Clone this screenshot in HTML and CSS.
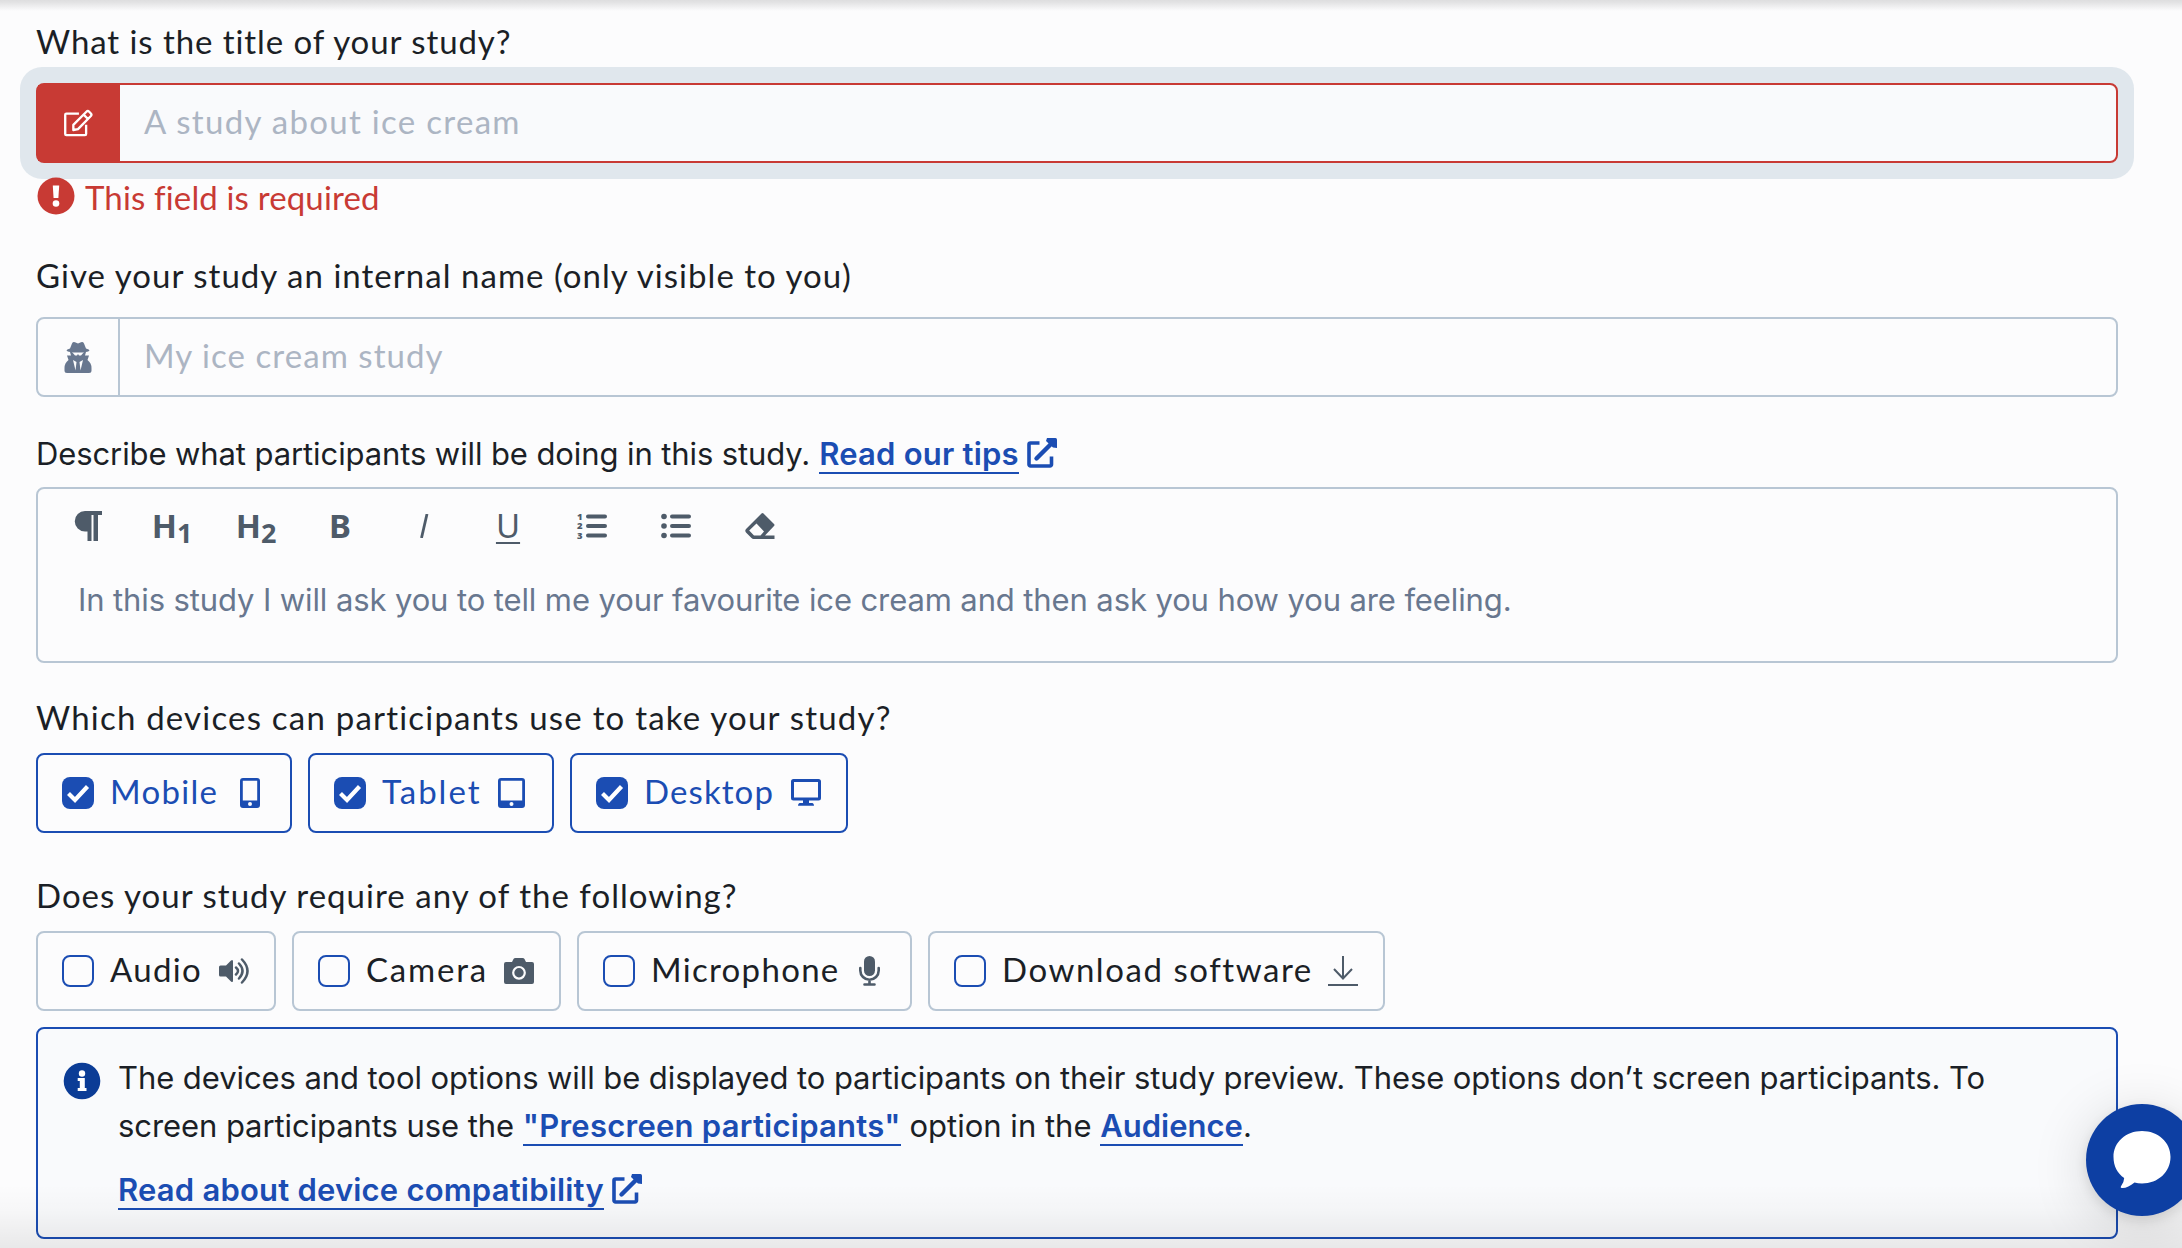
FILE: index.html
```html
<!DOCTYPE html>
<html lang="en">
<head>
<meta charset="utf-8">
<title>Study details</title>
<link rel="stylesheet" href="styles.css">
</head>
<body>
<svg class="defs" width="0" height="0">
  <symbol id="check" viewBox="0 0 32 32"><path d="M6.500 16.500 L13 23 L25.500 9.500" fill="none" stroke="#fff" stroke-width="4.200"/></symbol>
  <symbol id="external" viewBox="0 0 30 30"><path d="M12.500 5H3.500A1.500 1.500 0 0 0 2 6.500V26.500A1.500 1.500 0 0 0 3.500 28H23A1.500 1.500 0 0 0 24.500 26.500V18.500" fill="none" stroke="currentColor" stroke-width="3.600"/><path d="M9.500 20.500 25 5" fill="none" stroke="currentColor" stroke-width="4.400" stroke-linecap="round"/><path d="M20 0H28.500Q30 0 30 1.500V10L26 9.500 19 3Z" fill="currentColor"/></symbol>
</svg>
<form class="form">
  <label class="label l-title"><span>What is the title of your study?</span></label>
  <div class="field field-error">
    <div class="addon"><svg width="30" height="28" viewBox="0 0 32 30" fill="none" stroke="#fff" stroke-width="2.500" stroke-linejoin="round"><path d="M17 5H3.500A1.200 1.200 0 0 0 2.300 6.200V26.800A1.200 1.200 0 0 0 3.500 28H23.500A1.200 1.200 0 0 0 24.700 26.800V17"/><path d="M11 22.500V17L25 3Q26.500 1.500 28 3L29.800 4.800Q31 6.200 29.800 7.500L16 21.500ZM22 6 27 11"/></svg></div>
    <span class="hint h-title">A study about ice cream</span>
  </div>
  <div class="error"><svg width="38" height="38" viewBox="0 0 38 38"><circle cx="19" cy="19" r="18.500" fill="#c83a34"/><path d="M15.800 8.500H22.200L21.400 21H16.600Z" fill="#fff"/><circle cx="19" cy="26.500" r="3.300" fill="#fff"/></svg><span>This field is required</span></div>
  <label class="label l-name"><span>Give your study an internal name (only visible to you)</span></label>
  <div class="field">
    <div class="addon"><svg width="28" height="31" viewBox="0 0 28 31" fill="#68778f"><path d="M8 1.500Q9-.5 11 .3L14 1.500 17 .3Q19-.5 20 1.500L22 6.500Q25.500 7.500 25.500 8.500 24 10.500 14 10.500T2.500 8.500Q2.500 7.500 6 6.500Z"/><path d="M6 10 7 13.500H3L4.500 18Q.5 21 .5 26V28.500Q.5 31 3 31H25Q27.500 31 27.500 28.500V26Q27.500 21 23.500 18L25 13.500H21L22 10H20L17 13.500H15L14 12 13 13.500H11L8 10Z"/><path d="M9 18 12.500 20 11.500 28.500ZM19 18 15.500 20 16.500 28.500Z" fill="#fcfcfd"/></svg></div>
    <span class="hint h-name">My ice cream study</span>
  </div>
  <div class="label l-desc sans"><span class="d-text">Describe what participants will be doing in this study.</span><a class="link d-link">Read our tips</a><svg class="ext" width="30" height="30"><use href="#external"/></svg></div>
  <div class="editor">
    <div class="toolbar">
      <span class="tool"><svg width="28" height="30" viewBox="0 0 28 30" fill="#4e5b69"><path d="M11 0H28V4H24V30H19.500V4H17.500V30H13.500V20.500H11A10.250 10.250 0 0 1 11 0Z"/></svg></span>
      <span class="tool">H<sub>1</sub></span>
      <span class="tool">H<sub>2</sub></span>
      <span class="tool">B</span>
      <span class="tool"><svg width="10" height="24" viewBox="0 0 10 24"><path d="M8 0 2.500 24" stroke="#4e5b69" stroke-width="2.800"/></svg></span>
      <span class="tool under">U</span>
      <span class="tool"><svg class="list" width="30" height="28" viewBox="0 0 30 28"><path d="M11 4.500H28M11 14H28M11 23.500H28" stroke="#4e5b69" stroke-width="4" stroke-linecap="round"/><g fill="#4e5b69" class="digits"><text x="0" y="7.500">1</text><text x="0" y="17">2</text><text x="0" y="26.500">3</text></g></svg></span>
      <span class="tool"><svg width="30" height="28" viewBox="0 0 30 28"><path d="M11 4.500H28M11 14H28M11 23.500H28" stroke="#4e5b69" stroke-width="4" stroke-linecap="round"/><g fill="#4e5b69"><circle cx="3" cy="4.500" r="2.800"/><circle cx="3" cy="14" r="2.800"/><circle cx="3" cy="23.500" r="2.800"/></g></svg></span>
      <span class="tool"><svg class="eraser" width="30" height="26" viewBox="0 0 30 26"><path fill="#4e5b69" fill-rule="evenodd" d="M18.500.5 29 11Q30 12 29 13L20 22.500H29.500V26H8.500Q7.500 26 6.500 25L1 19.500Q-.5 17.800 1 16L16.500.5Q17.500-.5 18.500.5ZM11.500 10.500 4.200 17.500 9 22.500H15.500L19 18.500Z"/></svg></span>
    </div>
    <p class="sans editor-hint">In this study I will ask you to tell me your favourite ice cream and then ask you how you are feeling.</p>
  </div>
  <label class="label l-devices"><span>Which devices can participants use to take your study?</span></label>
  <div class="chips">
    <div class="chip on w-mobile"><svg class="box" width="32" height="32"><use href="#check"/></svg><span class="t-mobile">Mobile</span><svg class="end" width="20" height="30" viewBox="0 0 20 30"><path fill="currentColor" fill-rule="evenodd" d="M3 0H17A3 3 0 0 1 20 3V27A3 3 0 0 1 17 30H3A3 3 0 0 1 0 27V3A3 3 0 0 1 3 0ZM2.800 2.800V22.500H17.200V2.800ZM10 24A2 2 0 1 0 10 28 2 2 0 1 0 10 24Z"/></svg></div>
    <div class="chip on w-tablet"><svg class="box" width="32" height="32"><use href="#check"/></svg><span class="t-tablet">Tablet</span><svg class="end" width="27" height="30" viewBox="0 0 27 30"><path fill="currentColor" fill-rule="evenodd" d="M3 0H24A3 3 0 0 1 27 3V27A3 3 0 0 1 24 30H3A3 3 0 0 1 0 27V3A3 3 0 0 1 3 0ZM2.800 2.800V22.500H24.200V2.800ZM13.500 24A2 2 0 1 0 13.500 28 2 2 0 1 0 13.500 24Z"/></svg></div>
    <div class="chip on w-desktop"><svg class="box" width="32" height="32"><use href="#check"/></svg><span class="t-desktop">Desktop</span><svg class="end" width="30" height="28" viewBox="0 0 30 28"><path fill="currentColor" fill-rule="evenodd" d="M2.500 0H27.500Q30 0 30 2.500V19Q30 21.500 27.500 21.500H18V24H21.500Q23 24.500 23 26.800H7Q7 24.500 8.500 24H12V21.500H2.500Q0 21.500 0 19V2.500Q0 0 2.500 0ZM3 3V18.500H27V3Z"/></svg></div>
  </div>
  <label class="label l-require"><span>Does your study require any of the following?</span></label>
  <div class="chips">
    <div class="chip w-audio"><i class="box"></i><span class="t-audio">Audio</span><svg class="end" width="31" height="26" viewBox="0 0 31 26"><path d="M1.500 7.500H7L12 2.500Q14 1 14 3.500V22.500Q14 25 12 23.500L7 18.500H1.500Q0 18.500 0 17V9Q0 7.500 1.500 7.500Z" fill="currentColor"/><path d="M17 9.500Q21 13 17 16.500M20 5.500Q27 13 20 20.500M23 1.500Q34 13 23 24.500" fill="none" stroke="currentColor" stroke-width="2.500" stroke-linecap="round"/></svg></div>
    <div class="chip w-camera"><i class="box"></i><span class="t-camera">Camera</span><svg class="end" width="30" height="26" viewBox="0 0 30 26"><path d="M2 4H8L9.500 1Q10 0 11.500 0H18.500Q20 0 20.500 1L22 4H28Q30 4 30 6V24Q30 26 28 26H2Q0 26 0 24V6Q0 4 2 4Z" fill="currentColor"/><circle cx="15" cy="14.800" r="5.800" fill="none" stroke="#fcfcfd" stroke-width="2.200"/></svg></div>
    <div class="chip w-mic"><i class="box"></i><span class="t-mic">Microphone</span><svg class="end mic" width="21" height="30" viewBox="0 0 21 30"><rect x="5" width="11" height="20" rx="5.500" fill="currentColor"/><path d="M1.300 12V14.500A9.200 9.200 0 0 0 19.700 14.500V12M10.500 24V28M5.500 28.500H15.500" fill="none" stroke="currentColor" stroke-width="2.600" stroke-linecap="round"/></svg></div>
    <div class="chip w-down"><i class="box"></i><span class="t-down">Download software</span><svg class="end" width="30" height="30" viewBox="0 0 30 30"><path d="M15 0V22M6 13 15 22.500 24 13M0 29H30" fill="none" stroke="currentColor" stroke-width="2"/></svg></div>
  </div>
  <div class="info">
    <svg class="info-icon" width="38" height="38" viewBox="0 0 38 38"><circle cx="19" cy="19" r="18.300" fill="#0b3c96"/><path d="M14.700 16H21.800V26H23.500V29H14.700V26H16.800V19H14.700Z" fill="#fff"/><circle cx="19" cy="11.500" r="3.200" fill="#fff"/></svg>
    <div class="sans info-text">
      <p><span class="i1">The devices and tool options will be displayed to participants on their study preview. These options don’t screen participants. To</span><br><span class="i2">screen participants use the</span> <a class="link i3">"Prescreen participants"</a> <span class="i4">option in the</span> <a class="link i5">Audience</a>.</p>
      <p class="more"><a class="link i6">Read about device compatibility</a><svg class="ext" width="30" height="30"><use href="#external"/></svg></p>
    </div>
  </div>
</form>
<div class="top-shade"></div>
<div class="bottom-shade"></div>
<div class="chat"><svg width="58" height="58" viewBox="0 0 58 58"><path d="M29 0C45 0 57.500 11 57.500 26S45 52.500 29 52.500Q25 52.500 21.500 51.500C17 55 12.500 57.500 8.500 57Q7 56.500 8 55.200 11 51.500 11.200 47C4.500 42.500.5 35 .5 26 .5 11 13 0 29 0Z" fill="#fff"/></svg></div>
</body>
</html>
```
FILE: styles.css
```css
* { box-sizing: border-box; }
html, body { height: 100%; }
body {
  margin: 0;
  position: relative;
  overflow: hidden;
  background: #fcfcfd;
  color: #1b1f26;
  font-family: Lato, "Open Sans", sans-serif;
  font-size: 33px;
  line-height: 48px;
  font-variant-ligatures: none;
}
.defs { position: absolute; }
.form { padding: 17px 64px 0 36px; }
.form svg { flex: none; display: block; }
.sans { font-family: Inter, "Liberation Sans", sans-serif; font-size: 31px; }
.label { display: flex; height: 48px; white-space: nowrap; }
.l-title { margin-bottom: 18px; letter-spacing: .92px; }
.field {
  display: flex;
  height: 80px;
  border: 2px solid #b8c6d4;
  border-radius: 8px;
}
.addon {
  width: 82px;
  display: flex;
  align-items: center;
  justify-content: center;
  border-right: 2px solid #b8c6d4;
}
.field-error {
  border-color: #c83a34;
  background: #f9fafc;
  box-shadow: 0 0 0 16px #e0e7ed;
}
.field-error .addon { background: #c83a34; border: 0; padding-right: 3px; }
.hint { padding-left: 24px; line-height: 72px; color: #acb5c3; white-space: nowrap; }
.h-title { letter-spacing: 1.3px; }
.h-name { letter-spacing: 1.05px; }
.error { display: flex; height: 48px; margin: 11px 0 0 1px; gap: 10px; color: #c83a34; white-space: nowrap; letter-spacing: .15px; }
.error svg { margin-top: 3px; }
.error span { line-height: 47px; }
.l-name { margin: 29px 0 18px; letter-spacing: 1.03px; }
.l-desc { margin: 33px 0 9px; align-items: flex-start; }
.d-text { letter-spacing: -.1px; }
.link { color: #1b4db3; font-weight: 600; height: 44px; border-bottom: 2px solid #1b4db3; display: inline-block; }
.d-link { margin-left: 9px; letter-spacing: .22px; }
.ext { color: #1b4db3; margin: 8px 0 0 8px; }
.editor { height: 176px; border: 2px solid #b8c6d4; border-radius: 8px; padding: 13px 8px 0; }
.toolbar { display: flex; height: 48px; color: #4e5b69; font: bold 33px/48px "Noto Sans", sans-serif; }
.tool { width: 84px; display: flex; align-items: center; justify-content: center; }
.tool sub { font-size: 27px; line-height: 1; position: relative; top: 6px; vertical-align: baseline; }
.under { font-weight: 400; text-decoration: underline; text-decoration-thickness: 2px; text-underline-offset: 4px; }
.list { overflow: visible; }
.digits { font: 900 9.5px/9px "Noto Sans", sans-serif; }
.editor-hint { margin: 26px 0 0 32px; white-space: nowrap; line-height: 48px; color: #68778f; letter-spacing: -.11px; }
.l-devices { margin: 30px 0 12px; letter-spacing: 1.2px; }
.l-require { margin: 38px 0 12px; letter-spacing: 1.02px; }
.chips { display: flex; gap: 16px; }
.chip {
  height: 80px;
  border: 2px solid #b8c6d4;
  border-radius: 8px;
  display: flex;
  align-items: center;
  padding: 0 25px 0 24px;
  white-space: nowrap;
}
.chip span { margin: -4px 0 0 16px; }
.chip .end { margin-left: auto; color: #4e5b69; }
.w-audio .end { position: relative; left: 1px; }
.chip .mic { margin-right: 5px; }
.chip .box { width: 32px; height: 32px; border: 2px solid #1b4db3; border-radius: 8px; flex: none; }
.on { border-color: #1b4db3; color: #1b4db3; }
.chip.on .box { background: #1b4db3; border: 0; }
.chip.on .end { color: #1b4db3; }
.w-mobile { width: 256px; padding-right: 30px; }
.w-tablet { width: 246px; padding-right: 27px; }
.w-desktop { width: 278px; }
.w-audio { width: 240px; }
.w-camera { width: 269px; }
.w-mic { width: 335px; }
.w-down { width: 457px; }
.t-mobile, .t-audio, .t-mic { letter-spacing: 1.3px; }
.t-tablet { letter-spacing: 2px; }
.t-desktop { letter-spacing: 1.1px; }
.t-camera { letter-spacing: 1.8px; }
.t-down { letter-spacing: 1.55px; }
.info {
  margin-top: 16px;
  height: 212px;
  border: 2px solid #1b4db3;
  border-radius: 8px;
  background: #f9fafc;
  display: flex;
  padding: 25px 0 0 25px;
}
.info-icon { margin-top: 8px; }
.info-text { margin-left: 17px; white-space: nowrap; }
.info-text p { margin: 0; }
.info-text .more { display: flex; margin-top: 16px; }
.i1, .i2 { letter-spacing: -.075px; }
.i3 { letter-spacing: .25px; }
.i6 { letter-spacing: .2px; }
.top-shade { position: absolute; inset: 0 0 auto; height: 11px; background: linear-gradient(#dededf, #e2e2e3 20%, #fcfcfd00); }
.bottom-shade { position: absolute; inset: auto 0 0; height: 64px; background: linear-gradient(#0000, #00000005 40%, #00000014); }
.chat {
  position: absolute;
  left: 2086px;
  top: 1104px;
  width: 112px;
  height: 112px;
  border-radius: 50%;
  background: #0d3fa3;
  box-shadow: 0 4px 12px #0000001a, 0 8px 56px #00000026;
  padding: 27px;
}
```
